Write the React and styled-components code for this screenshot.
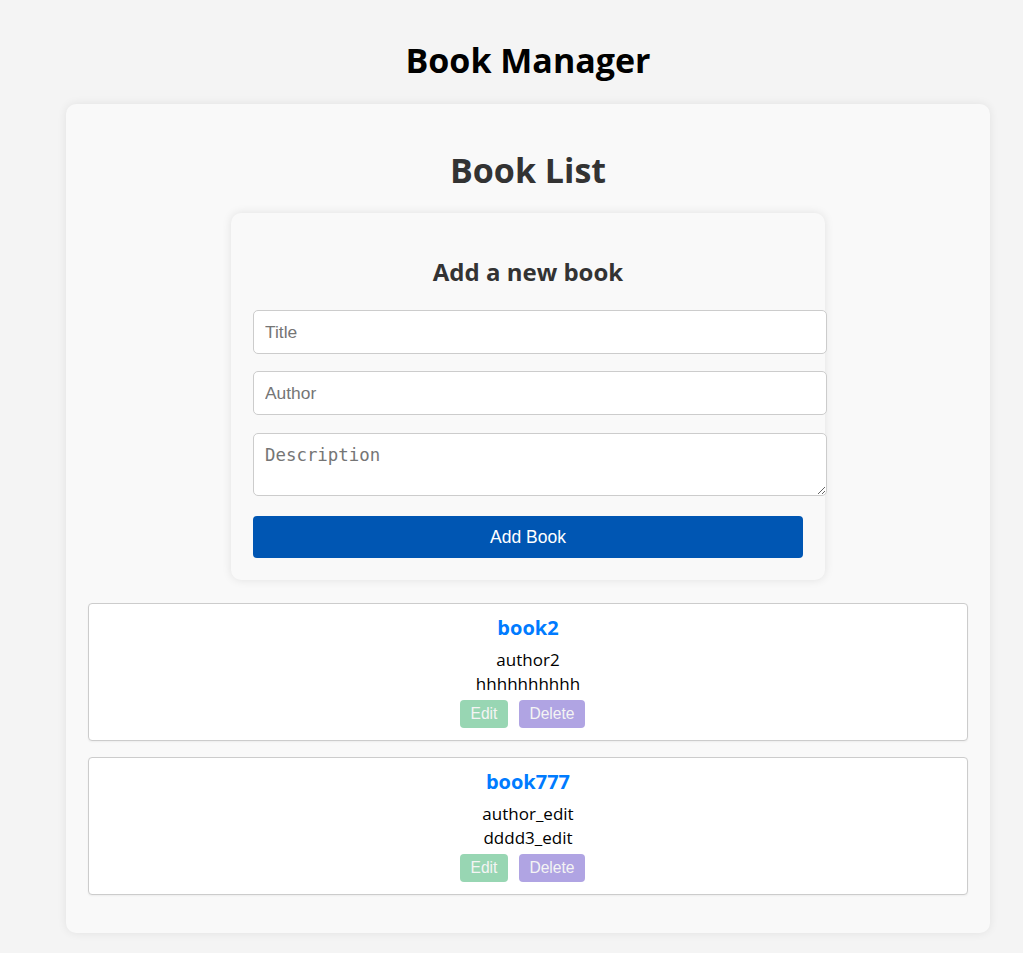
import React from 'react';
import styled, { createGlobalStyle } from 'styled-components';

const GlobalStyle = createGlobalStyle`
  body {
    margin: 0;
    background: #f4f4f4;
    font-family: "Open Sans", "DejaVu Sans", sans-serif;
    color: #000;
  }
`;

const Page = styled.div`
  padding: 0 0 20px 33px;
`;

const Title = styled.h1`
  margin: 0;
  padding: 40px 0 24px;
  text-align: center;
  font-size: 34px;
  line-height: 40px;
  font-weight: 700;
`;

const Container = styled.div`
  margin: 0 33px;
  padding: 22px 22px 38px;
  background: #f9f9f9;
  border-radius: 10px;
  box-shadow: 0 0 10px rgba(0, 0, 0, 0.08);
`;

const ListTitle = styled.h2`
  margin: 22px 0 21px;
  text-align: center;
  font-size: 34px;
  line-height: 44px;
  color: #333;
`;

const FormCard = styled.form`
  width: 550px;
  margin: 0 auto 23px;
  padding: 22px;
  background: #f9f9f9;
  border-radius: 10px;
  box-shadow: 0 0 10px rgba(0, 0, 0, 0.1);
`;

const FormTitle = styled.h3`
  margin: 22px 0 23px;
  text-align: center;
  font-size: 24px;
  line-height: 30px;
  color: #333;
`;

const Field = styled.input`
  display: block;
  width: 550px;
  height: 20px;
  padding: 11px;
  margin: 0 0 17px;
  border: 1px solid #ccc;
  border-radius: 5px;
  background: #fff;
  font-family: "Liberation Sans", Arial, sans-serif;
  font-size: 17.4px;
  &::placeholder { color: #757575; }
`;

const Area = styled.textarea`
  display: block;
  width: 550px;
  height: 40px;
  padding: 10px 11px 11px;
  margin: 18px 0 20px;
  border: 1px solid #ccc;
  border-radius: 5px;
  background: #fff;
  font-family: "DejaVu Sans Mono", monospace;
  font-size: 17.4px;
  line-height: 22px;
  &::placeholder { color: #757575; }
`;

const SubmitButton = styled.button`
  display: block;
  width: 550px;
  height: 42px;
  border: none;
  border-radius: 4px;
  background: #0056b3;
  color: #fff;
  font-family: "Liberation Sans", Arial, sans-serif;
  font-size: 17.5px;
`;

const BookCard = styled.div`
  margin-bottom: 16px;
  padding: 11px 0 12px;
  background: #fff;
  border: 1px solid #ccc;
  border-radius: 4px;
  box-shadow: 0 1px 2px rgba(0, 0, 0, 0.05);
  text-align: center;
  &:last-child { margin-bottom: 0; }
`;

const BookName = styled.h3`
  margin: 0 0 7px;
  font-size: 20px;
  line-height: 26px;
  color: #007bff;
`;

const BookLine = styled.p`
  margin: 0;
  font-size: 17px;
  line-height: 24px;
`;

const Actions = styled.div`
  display: flex;
  justify-content: center;
  margin-top: 4px;
`;

const SmallButton = styled.button`
  height: 28px;
  margin-right: 11px;
  padding: 0 10.5px;
  border: none;
  border-radius: 4px;
  background: ${p => (p.$kind === 'edit' ? '#98d6b3' : '#b0a4e3')};
  color: #f4f4f4;
  font-family: "Liberation Sans", Arial, sans-serif;
  font-size: 15.6px;
`;

const books = [
  { id: 1, title: 'book2', author: 'author2', description: 'hhhhhhhhhh' },
  { id: 2, title: 'book777', author: 'author_edit', description: 'dddd3_edit' },
];

export default function App() {
  return (
    <Page>
      <GlobalStyle />
      <Title>Book Manager</Title>
      <Container>
        <ListTitle>Book List</ListTitle>
        <FormCard onSubmit={e => e.preventDefault()}>
          <FormTitle>Add a new book</FormTitle>
          <Field placeholder="Title" />
          <Field placeholder="Author" />
          <Area placeholder="Description" />
          <SubmitButton type="submit">Add Book</SubmitButton>
        </FormCard>
        {books.map(book => (
          <BookCard key={book.id}>
            <BookName>{book.title}</BookName>
            <BookLine>{book.author}</BookLine>
            <BookLine>{book.description}</BookLine>
            <Actions>
              <SmallButton $kind="edit">Edit</SmallButton>
              <SmallButton $kind="delete">Delete</SmallButton>
            </Actions>
          </BookCard>
        ))}
      </Container>
    </Page>
  );
}
